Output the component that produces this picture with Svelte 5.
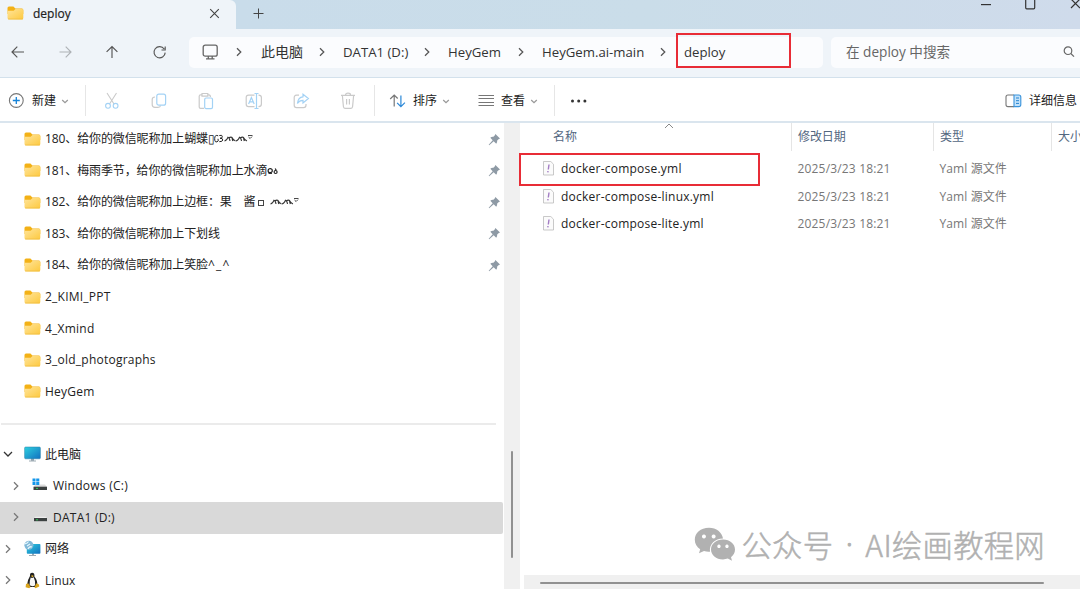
<script>
  const pinned = [
    { name: '180、给你的微信昵称加上蝴蝶▯', tail: 'butterfly' },
    { name: '181、梅雨季节，给你的微信昵称加上水滴', tail: 'drop' },
    { name: '182、给你的微信昵称加上边框：果　酱', tail: 'frame' },
    { name: '183、给你的微信昵称加上下划线' },
    { name: '184、给你的微信昵称加上笑脸', smile: '^_^' }
  ];
  const folders = ['2_KIMI_PPT', '4_Xmind', '3_old_photographs', 'HeyGem'];
  const files = ['docker-compose.yml', 'docker-compose-linux.yml', 'docker-compose-lite.yml'];
  const crumbs = ['此电脑', 'DATA1 (D:)', 'HeyGem', 'HeyGem.ai-main'];
</script>

{#snippet folder()}
  <svg class="folder" width="17" height="14" viewBox="0 0 17 14">
    <defs>
      <linearGradient id="fg" x1="0" y1="0" x2="1" y2="1">
        <stop offset="0" stop-color="#ffe49a" /><stop offset="1" stop-color="#fdc93f" />
      </linearGradient>
    </defs>
    <path d="M.5 2Q.5.5 2 .5H6.4L8.4 2.4H15Q16.3 2.4 16.3 4V8H.5Z" fill="#f3b116" />
    <path d="M.5 4.8H6.7L8.5 3H15Q16.3 3 16.3 4.3V12Q16.3 13.4 15 13.4H2Q.5 13.4.5 12Z" fill="url(#fg)" />
    <path d="M1 13H16" stroke="#eebb42" stroke-width=".7" />
  </svg>
{/snippet}

{#snippet chev(color = '#555', dir = 'right')}
  <svg class="chev" width="10" height="10" viewBox="0 0 10 10" fill="none" stroke={color} stroke-width="1.25">
    <path d={dir === 'right' ? 'M3 1.2 6.8 5 3 8.8' : dir === 'small' ? 'M2.2 4 5 6.7 7.8 4' : 'M1 3 5 7 9 3'} />
  </svg>
{/snippet}

{#snippet squiggle()}
  <svg width="30" height="9" viewBox="0 0 30 9" fill="none" stroke="#333" stroke-width="1.1">
    <path d="M.5 7Q3 6.5 4 3.2 5.5 3.5 6 7M4.5 4Q7 2.5 8 3.5 9.5 6.5 11.5 7M8 4 8.8 7M12 7Q14.5 6.5 15.5 3.2 17 3.5 17.5 7M16 4Q18.5 2.5 19.5 3.5 21 6.5 23 7M19.5 4 20.3 7" /><path d="M24 1.5H28.5M24.5 3 26.1 4.5 28 2.6" stroke-width=".9" />
  </svg>
{/snippet}

<div class="window">
  <header class="titlebar">
    <div class="tab">
      {@render folder()}
      <span class="tabname">deploy</span>
      <svg width="11" height="11" viewBox="0 0 11 11" stroke="#444" stroke-width="1.1"><path d="M1.2 1.2 9.8 9.8M9.8 1.2 1.2 9.8" /></svg>
    </div>
    <svg class="plus" width="11" height="11" viewBox="0 0 11 11" stroke="#444" stroke-width="1"><path d="M.5 5.5H10.5M5.5.5V10.5" /></svg>
    <svg class="controls" width="100" height="12" viewBox="0 0 100 12" fill="none" stroke="#333" stroke-width="1.2">
      <path d="M1 4.6H11" /><rect x="45.7" y="-.8" width="9" height="9.6" rx="1" /><path d="M91 -1 100 8M91 8 100 -1" />
    </svg>
  </header>

  <nav class="address">
    <svg class="arrows" width="168" height="16" viewBox="0 0 168 16" fill="none" stroke="#555" stroke-width="1.15">
      <path d="M12 8H24M17.3 2.7 12 8 17.3 13.3" />
      <path d="M59.5 8H71M65.7 2.7 71 8 65.7 13.3" stroke="#aeb2b6" />
      <path d="M112 14V2.5M106.6 7.9 112 2.5 117.4 7.9" />
      <path d="M164.2 5A5.6 5.6 0 1 0 165.2 8.6M165.2 2.5V6H161.5" />
    </svg>
    <div class="crumbs">
      <svg width="17" height="16" viewBox="0 0 17 16" fill="none" stroke="#666" stroke-width="1.3"><rect x="2.2" y="1.2" width="14" height="11" rx="2" /><path d="M7.3 12V14.5M11.2 12V14.5M5 14.8H13.5" /></svg>
      {@render chev()}
      {#each crumbs as c, i}
        <span class="crumb" class:han={i === 0}>{c}</span>
        {@render chev()}
      {/each}
      <span class="current">deploy</span>
    </div>
    <div class="search">
      <span>在 deploy 中搜索</span>
      <svg width="12" height="12" viewBox="0 0 12 12" fill="none" stroke="#666" stroke-width="1.2"><circle cx="5" cy="4.7" r="3.8" /><path d="M7.8 7.5 11 10.7" /></svg>
    </div>
  </nav>

  <div class="toolbar">
    <svg width="17" height="17" viewBox="0 0 17 17" fill="none" stroke="#777"><circle cx="8.3" cy="8.5" r="6.9" stroke-width="1.1" /><path d="M4.8 8.5H11.8M8.3 5V12" stroke="#1683d8" stroke-width="1.3" /></svg>
    <span>新建</span>
    {@render chev('#999', 'small')}
    <i class="rule"></i>
    <svg width="16" height="18" viewBox="0 0 16 18" fill="none" stroke="#cacaca" stroke-width="1.1"><path d="M3 1 10 12M12.5 1 5.5 12" /><g stroke="#a3d2f5"><circle cx="4" cy="13.8" r="2.4" /><circle cx="11.6" cy="13.8" r="2.4" /></g></svg>
    <svg width="16" height="18" viewBox="0 0 16 18" fill="none" stroke="#cacaca" stroke-width="1.2"><path d="M4 5Q1.2 5 1.2 7.5V12.5Q1.2 15.3 4 15.3H7Q9.3 15.3 9.6 13.5" /><rect x="5.8" y="2.2" width="8.8" height="11" rx="2" stroke="#a3d2f5" /></svg>
    <svg width="16" height="18" viewBox="0 0 16 18" fill="none" stroke="#cacaca" stroke-width="1.2"><path d="M4 2.8H2.6Q1.2 2.8 1.2 4.2V15Q1.2 16.4 2.6 16.4H6M9.8 2.8H11Q12.4 2.8 12.4 5M4 1.5H9.8V4.2H4Z" /><rect x="6.7" y="6" width="7.8" height="10.6" rx="1.4" stroke="#a3d2f5" /></svg>
    <svg width="18" height="18" viewBox="0 0 18 18" fill="none" stroke="#cacaca" stroke-width="1.2"><path d="M9.5 3.2H3.5Q1.2 3.2 1.2 5.5V12Q1.2 14.6 3.5 14.6H9.5M13.5 3.2Q16.4 3.2 16.4 5.5V12Q16.4 14.6 13.5 14.6" /><path d="M11.5 1.5V16.5M9.5 1.5H13.5M9.5 16.5H13.5M3.6 12 6.4 5.5 9.2 12M4.6 9.8H8.2" stroke="#a3d2f5" /></svg>
    <svg width="17" height="18" viewBox="0 0 17 18" fill="none" stroke="#cacaca" stroke-width="1.2"><path d="M6 3.2H3.5Q1.2 3.2 1.2 5.6V13.3Q1.2 15.6 3.5 15.6H10.5Q13 15.6 13 13.3V12" /><path d="M10 2.2 15.4 6.5 10 11V8.4Q6.3 8.4 4.4 11.5 5 5.2 10 4.8Z" stroke="#a3d2f5" /></svg>
    <svg width="16" height="18" viewBox="0 0 16 18" fill="none" stroke="#cacaca" stroke-width="1.2"><path d="M1 3.4H15M5.5 3Q5.5 1.2 8 1.2T10.5 3M2.4 3.8 3.4 14.5Q3.6 16.4 5 16.4H11Q12.4 16.4 12.6 14.5L13.6 3.8M6.6 7V12.5M9.4 7V12.5" /></svg>
    <i class="rule"></i>
    <svg width="17" height="16" viewBox="0 0 17 16" fill="none" stroke="#777" stroke-width="1.2"><path d="M5.2 13.5V2M1.2 6 5.2 2 8.7 5.5" /><path d="M11.9 2.5V13.6M8.1 9.8 11.9 13.6 15.9 9.6" stroke="#2b88d8" /></svg>
    <span>排序</span>
    {@render chev('#999', 'small')}
    <svg width="17" height="14" viewBox="0 0 17 14" stroke="#777" stroke-width="1"><path d="M.5 1.5H16M.5 4.5H16M.5 8.5H16M.5 11.5H16" /></svg>
    <span>查看</span>
    {@render chev('#999', 'small')}
    <i class="rule"></i>
    <svg width="18" height="6" viewBox="0 0 18 6" fill="#333"><circle cx="3.5" cy="3" r="1.5" /><circle cx="9.7" cy="3" r="1.5" /><circle cx="15.9" cy="3" r="1.5" /></svg>
    <svg width="17" height="14" viewBox="0 0 17 14" fill="none"><path d="M9 1H3Q1 1 1 3V10.5Q1 12.6 3 12.6H9" stroke="#777" stroke-width="1.1" /><path d="M9 1H13.8Q15.8 1 15.8 3V10.5Q15.8 12.6 13.8 12.6H9Z" fill="#c2e2fa" stroke="#3a93db" stroke-width="1.1" /><path d="M11 4H14M11 6.7H14M11 9.4H14" stroke="#2583d0" /></svg>
    <span>详细信息</span>
  </div>

  <main>
    <aside>
      {#each pinned as p}
        <div class="row quick pinned">
          {@render folder()}
          <span>{p.name}{#if p.smile}<b>{p.smile}</b>{/if}</span>
          {#if p.tail === 'butterfly'}
            <svg class="wing" width="10" height="9" viewBox="0 0 10 9" fill="none" stroke="#222"><path d="M4.2 1.8Q.8.3.7 4.5T3 7.8Q5 7.4 4 4.8M5.3 1.5Q8.5.6 8.3 2.7T6 4.2Q9 4.3 8.8 6T5.3 7.7" /></svg>
            {@render squiggle()}
          {:else if p.tail === 'drop'}
            <svg width="12" height="9" viewBox="0 0 12 9" fill="none" stroke="#222" stroke-width="1.2"><ellipse cx="3.2" cy="4.7" rx="2.1" ry="2" /><path d="M1.5 7.3H5" /><circle cx="8.6" cy="6" r="1.5" /><path d="M8.2 2.5 9.2 4.2" /></svg>
          {:else if p.tail === 'frame'}
            <i class="box"></i>
            {@render squiggle()}
          {/if}
          <svg class="pin" width="13" height="13" viewBox="0 0 13 13"><path d="M7.4 1 12 5.6 10.5 6.3 9.2 7.6Q9.4 9.5 8.2 10.7L5.7 8.2 1.2 12.2.7 11.7 4.7 7.2 2.3 4.8Q3.5 3.6 5.4 3.8L6.7 2.5Z" fill="#8e9aa5" /></svg>
        </div>
      {/each}
      {#each folders as f}
        <div class="row quick">{@render folder()}<span>{f}</span></div>
      {/each}
      <div class="row divider"><hr /></div>
      <div class="row tree">
        {@render chev('#333', 'down')}
        <svg width="17" height="16" viewBox="0 0 17 16"><defs><linearGradient id="pc" x1="0" y1="0" x2="1" y2="1"><stop stop-color="#2ed0df" /><stop offset="1" stop-color="#1270c0" /></linearGradient></defs><path d="M7 12H10V14.5H12V15.4H5V14.5H7Z" fill="#9eabb4" /><rect x=".6" y="1" width="15.8" height="11.8" rx="1" fill="url(#pc)" stroke="#267fa7" stroke-width=".5" /></svg>
        <span class="zh">此电脑</span>
      </div>
      <div class="row tree sub">
        {@render chev('#777')}
        <svg width="17" height="15" viewBox="0 0 17 15"><path d="M3 6.5H13L14.8 9H2Z" fill="#ddd" /><path d="M1.5 8.7H15V12H1.5Z" fill="#3c4141" /><path d="M4 10.4H6" stroke="#30d158" /><path d="M.5.5H3.5V3.4H.5ZM4.2.5H7.3V3.4H4.2ZM.5 4.1H3.5V7H.5ZM4.2 4.1H7.3V7H4.2Z" fill="#1496ea" /></svg>
        <span>Windows (C:)</span>
      </div>
      <div class="row tree sub selected">
        {@render chev('#777')}
        <svg width="17" height="15" viewBox="0 0 17 15"><path d="M3.5 6.8H13.5L15 8.3H2Z" fill="#eee" /><path d="M2 8H15V11.2H2Z" fill="#3c4141" /><path d="M4 9.8H6" stroke="#30d158" /></svg>
        <span>DATA1 (D:)</span>
      </div>
      <div class="row tree">
        {@render chev('#777')}
        <svg width="17" height="17" viewBox="0 0 17 17"><path d="M8 13H10V15H12V16H5V15H8Z" fill="#9eabb4" /><rect x="2.8" y="4" width="13.6" height="9.7" rx=".8" fill="url(#pc)" /><circle cx="4.9" cy="5.2" r="4.5" fill="#80b8d8" /><path d="M1 3.5Q3 4 4.5 1.5M4 9Q5 6 8 7M3 6 6 4" fill="none" stroke="#e3f5fb" stroke-width="1.3" /></svg>
        <span class="zh">网络</span>
      </div>
      <div class="row tree">
        {@render chev('#777')}
        <svg width="17" height="17" viewBox="0 0 17 17"><path d="M6 4Q5.6.8 8.2.7 10.9.8 10.4 4.5 13.6 8.5 13.3 13L11 15H5.5L3 13Q3.4 8 6 4Z" fill="#222" /><path d="M6.7 5.5Q8 6.5 9.7 5.3 11.5 9 11.2 13.2 8.5 15 5.6 13.3 5.4 9 6.7 5.5Z" fill="#f7f7f7" /><path d="M2 12 4.2 11.3 6.6 15 5.2 16.3 1.6 15.2ZM15 12.4 12.4 11.3 10.4 15.2 11.5 16.3 15.2 14.4Z" fill="#d9a41d" /><path d="M7 3.8 8.4 3.2 9.8 4 8.3 5.2Z" fill="#e6b32a" /></svg>
        <span class="zh">Linux</span>
      </div>
    </aside>

    <div class="vscroll"><i></i></div>

    <section>
      <div class="columns">
        <span class="namecol">名称</span><span>修改日期</span><span>类型</span><span>大小</span>
        <svg class="sort" width="10" height="6" viewBox="0 0 10 6" fill="none" stroke="#888"><path d="M1 5 5 1 9 5" /></svg>
      </div>
      <div class="files">
        {#each files as f}
          <div class="file">
            <svg width="11" height="15" viewBox="0 0 11 15"><path d="M.5.5H7.8L10.5 3.2V14H.5Z" fill="#fbfbfb" stroke="#bbb" stroke-width=".8" /><path d="M6 3.5 5.3 8.5M5 10 4.8 11.3" stroke="#a27cc4" stroke-width="1.4" /></svg>
            <span class="fname">{f}</span>
            <span class="date">2025/3/23 18:21</span>
            <span class="type">Yaml 源文件</span>
          </div>
        {/each}
      </div>
      <div class="brand">
        <svg width="42" height="35" viewBox="0 0 42 35"><path fill-rule="evenodd" d="M15 .8C6.5.8.8 6 .8 12.8.8 17 3 20.3 6.2 22.3L5 26.3 10 24Q13 25 16 24.7C15 17.5 21 11.6 29 11.6 28 5.5 22.5.8 15 .8ZM10 7.4A2 2 0 1 1 9.9 7.4ZM19.7 7.4A2 2 0 1 1 19.6 7.4Z" fill="#b1b1b1" /><path fill-rule="evenodd" d="M29 12.5C22 12.5 17 17 17 22.5S22 32.4 29 32.4Q31.6 32.4 33.8 31.6L38 33.8 37 30.2C39.6 28.2 41 25.8 41 22.5 41 17 36 12.5 29 12.5ZM25 17.6A1.7 1.7 0 1 1 24.9 17.6ZM33 17.6A1.7 1.7 0 1 1 32.9 17.6Z" fill="#b1b1b1" /></svg>
        <span class="b1">公众号</span><span class="dot">·</span><span class="b2">AI绘画教程网</span>
      </div>
      <div class="hscroll"><i></i></div>
    </section>
  </main>
  <div class="mark path-mark"></div>
  <div class="mark file-mark"></div>
</div>

<style>
  :global(body) { margin: 0; overflow: hidden; }
  .window { position: relative; width: 1080px; height: 589px; overflow: hidden; display: flex; flex-direction: column; background: #fff; color: #222; font: 12px/16px "Open Sans", "Noto Sans CJK SC", sans-serif; }
  .window * { box-sizing: border-box; }
  span { white-space: pre; }
  svg { display: block; flex: none; }
  .titlebar { height: 29px; flex: none; display: flex; background: linear-gradient(90deg, #c9dcea 22%, #cadde9 60%, #cfdbeb); }
  .tab { width: 236px; height: 29px; display: flex; align-items: center; padding: 0 16px 3px 7px; background: #eff4f9; border-radius: 0 6px 0 0; }
  .tabname { margin-left: 9px; flex: 1; padding-top: 2px; -webkit-text-stroke: .2px; }
  .plus { margin: 8px 0 0 16.5px; }
  .controls { margin-left: auto; }
  .address { height: 49px; flex: none; display: flex; align-items: center; padding-bottom: 2px; background: #eff4f9; border-bottom: 1.5px solid #d3e1ec; font-size: 13.2px; color: #333; }
  .arrows { margin-right: 21px; }
  .crumbs { width: 634px; height: 31px; border-radius: 5px; background: #fbfcfe; display: grid; align-items: center; grid-template-columns: 33px 27px 56px 26px 79px 26px 68px 26px 116px 26px 1fr; padding-left: 12px; }
  .han { font-size: 14px; }
  .search { margin-left: 8px; width: 249px; height: 31px; border-radius: 5px 0 0 5px; background: #fbfcfe; display: flex; align-items: center; padding: 0 5px 0 15px; color: #666; justify-content: space-between; font-size: 13.6px; }
  .toolbar { height: 45px; flex: none; display: grid; align-items: center; grid-template-columns: 24px 28px 25px 19px 47px 47px 47px 48px 47px 34px 15px 24px 28px 37px 23px 28px 25px 15px 436px 24px 1fr; padding: 2px 0 0 8px; border-bottom: 2px solid #dae5ee; }
  .toolbar span { padding-top: 1px; }
  .rule { width: 1px; height: 31px; background: #e6e6e6; }
  main { flex: 1; min-height: 0; display: flex; }
  aside { width: 504px; padding-top: .5px; overflow: hidden; }
  .row { height: 31.55px; display: flex; align-items: center; }
  .row > svg { margin-top: -1px; }
  .quick { padding-left: 24px; }
  .quick span { margin-left: 4px; letter-spacing: .23px; }
  .pinned span { letter-spacing: -.11px; }
  .pinned b { font-weight: 400; letter-spacing: 1.2px; }
  .pinned .wing { margin-left: -1px; }
  .row > svg.pin { margin: 0 3px 0 auto; }
  .box { width: 6px; height: 6px; border: 1px solid #444; margin: 2px 6px 0 2px; }
  .divider { padding-right: 8px; }
  hr { width: 100%; border: 0; height: 2px; margin: 1px 0 0 1px; background: #ebebeb; }
  .tree { padding-left: 3px; gap: 4px; }
  .tree span { letter-spacing: .25px; }
  .tree .zh { letter-spacing: 0; }
  .tree .chev { margin-right: 7px; }
  .sub { padding-left: 11px; }
  .selected { width: 503px; background: #d9d9d9; border-radius: 0 2px 2px 0; }
  .vscroll { width: 16px; background: #f0f0f0; padding: 327.5px 0 0 7px; }
  .vscroll i { display: block; width: 2px; height: 107px; background: #919191; border-radius: 1px; }
  section { flex: 1; min-width: 0; display: flex; flex-direction: column; }
  .columns { position: relative; height: 28px; display: grid; grid-template-columns: 271px 142px 118px 29px; color: #53677f; }
  .columns span { padding: 6px 0 0 6px; border-left: 1px solid #e5e5e5; overflow: hidden; letter-spacing: -.1px; }
  .columns .namecol { padding-left: 33px; border: 0; }
  .columns .sort { position: absolute; left: 144px; top: 0; }
  .files { padding-top: 3.7px; }
  .file { height: 27.6px; display: grid; align-items: center; grid-template-columns: 18px 236.5px 142px 1fr; padding-left: 23px; color: #777; }
  .file span { padding-top: 1px; }
  .fname { color: #222; letter-spacing: .23px; }
  .date { letter-spacing: .17px; }
  .type { letter-spacing: .1px; }
  .brand { margin: auto 0 12px 173.5px; height: 38px; display: flex; align-items: center; font: 300 30.3px/38px "Noto Sans CJK SC", sans-serif; color: #b1b1b1; -webkit-text-stroke: .5px #b1b1b1; }
  .b1 { margin-left: 6px; letter-spacing: .3px; }
  .b2 { letter-spacing: .3px; }
  .dot { width: 32px; text-align: center; font-family: "Open Sans", sans-serif; -webkit-text-stroke-width: 1px; }
  .hscroll { height: 14px; margin-left: 4px; background: #f0f0f0; padding: 7px 0 0 16px; }
  .hscroll i { display: block; width: 504px; height: 2px; border-radius: 1px; background: #919191; }
  .mark { position: absolute; border: 2px solid #e82c36; }
  .path-mark { left: 676px; top: 33px; width: 115px; height: 35px; }
  .file-mark { left: 519px; top: 153px; width: 241px; height: 33px; }
</style>
